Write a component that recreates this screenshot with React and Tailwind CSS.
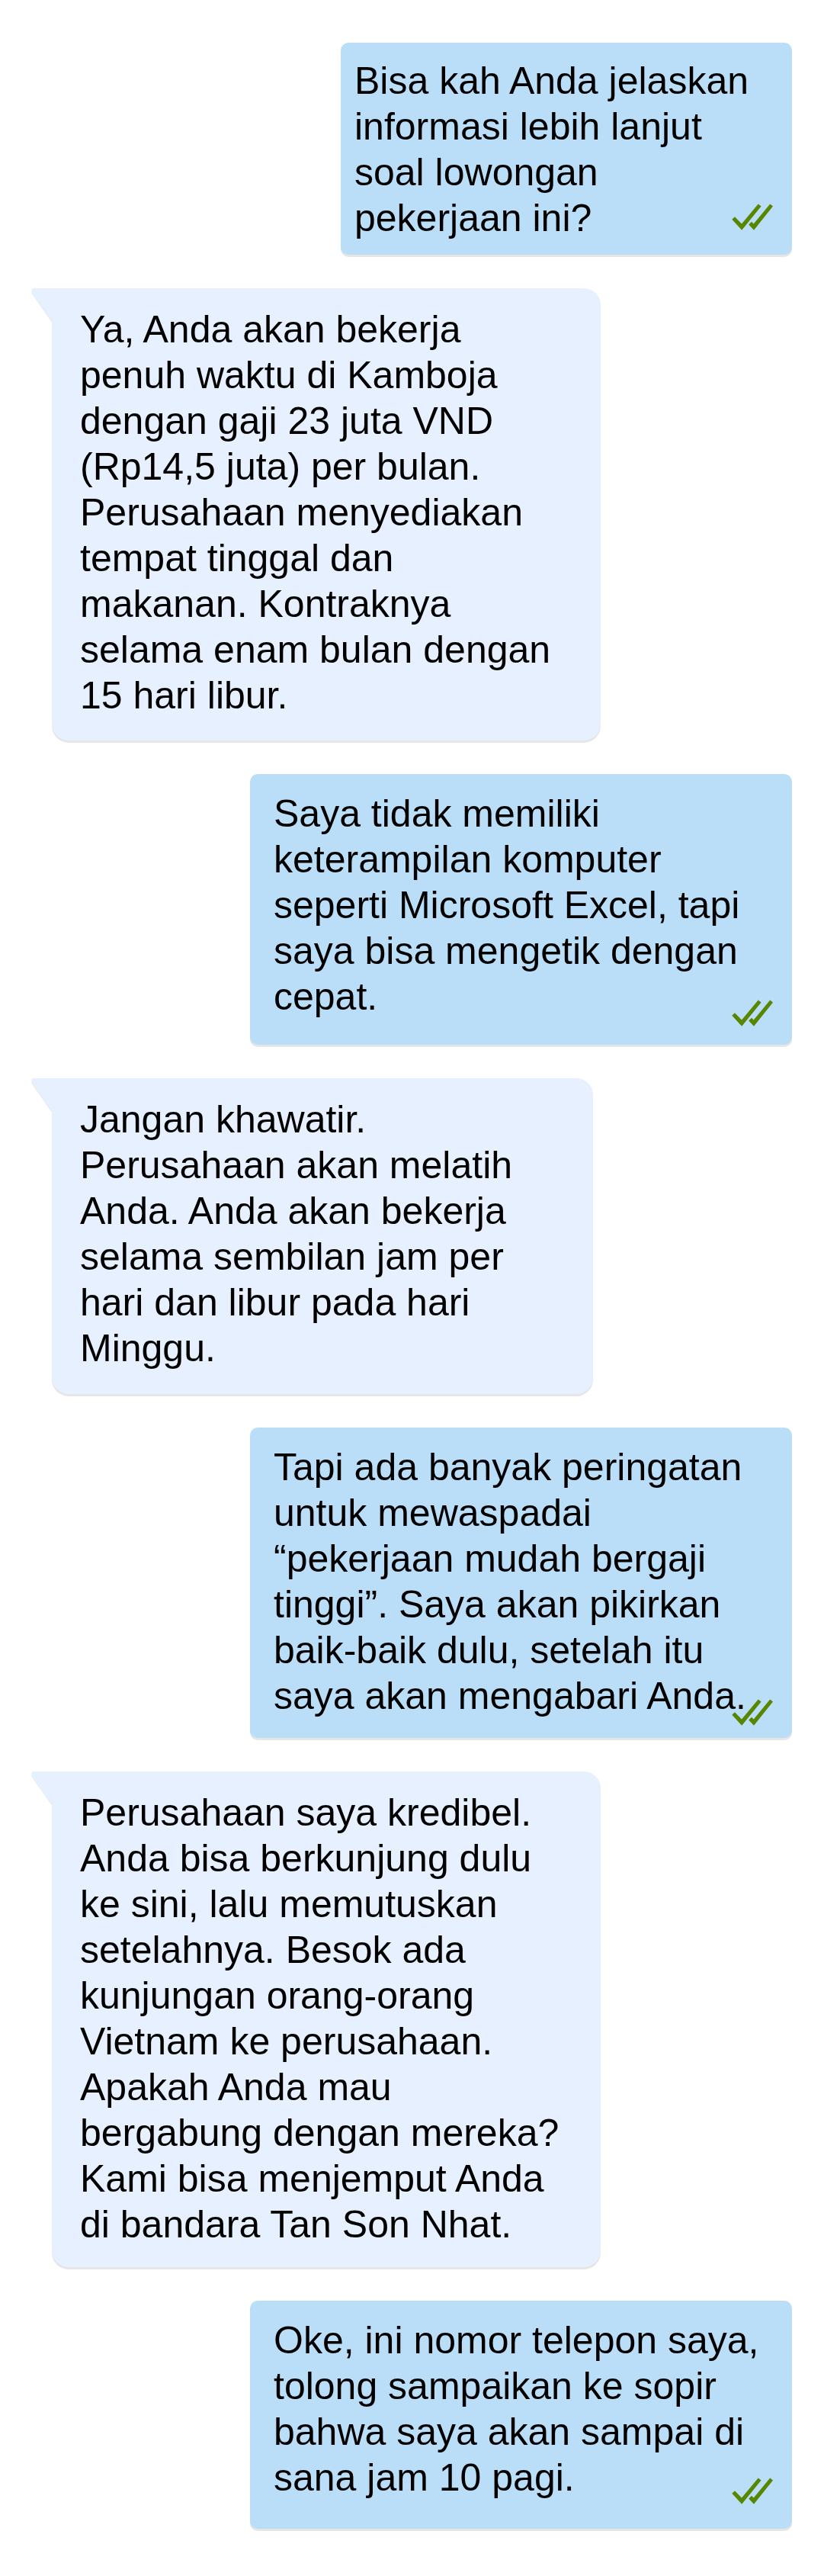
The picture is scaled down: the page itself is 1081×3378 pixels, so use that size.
import React from "react";

const messages = [
  {
    from: "me",
    box: "max-w-[592px] pt-5 pl-[18px] pb-[18px]",
    tick: "bottom-8",
    text: "Bisa kah Anda jelaskan\ninformasi lebih lanjut\nsoal lowongan\npekerjaan ini?",
  },
  {
    from: "them",
    box: "max-w-[720px] pb-[29px]",
    text: "Ya, Anda akan bekerja\npenuh waktu di Kamboja\ndengan gaji 23 juta VND\n(Rp14,5 juta) per bulan.\nPerusahaan menyediakan\ntempat tinggal dan\nmakanan. Kontraknya\nselama enam bulan dengan\n15 hari libur.",
  },
  {
    from: "me",
    box: "max-w-[711px] pt-[22px] pl-[31px] pb-[33px]",
    tick: "bottom-6",
    text: "Saya tidak memiliki\nketerampilan komputer\nseperti Microsoft Excel, tapi\nsaya bisa mengetik dengan\ncepat.",
  },
  {
    from: "them",
    box: "max-w-[710px] pb-[30px]",
    text: "Jangan khawatir.\nPerusahaan akan melatih\nAnda. Anda akan bekerja\nselama sembilan jam per\nhari dan libur pada hari\nMinggu.",
  },
  {
    from: "me",
    box: "max-w-[711px] pt-[22px] pl-[31px] pb-[25px]",
    tick: "bottom-4",
    text: "Tapi ada banyak peringatan\nuntuk mewaspadai\n“pekerjaan mudah bergaji\ntinggi”. Saya akan pikirkan\nbaik-baik dulu, setelah itu\nsaya akan mengabari Anda.",
  },
  {
    from: "them",
    box: "max-w-[720px] pb-[26px]",
    text: "Perusahaan saya kredibel.\nAnda bisa berkunjung dulu\nke sini, lalu memutuskan\nsetelahnya. Besok ada\nkunjungan orang-orang\nVietnam ke perusahaan.\nApakah Anda mau\nbergabung dengan mereka?\nKami bisa menjemput Anda\ndi bandara Tan Son Nhat.",
  },
  {
    from: "me",
    box: "max-w-[711px] pt-[22px] pl-[31px] pb-[37px]",
    tick: "bottom-8",
    text: "Oke, ini nomor telepon saya,\ntolong sampaikan ke sopir\nbahwa saya akan sampai di\nsana jam 10 pagi.",
  },
];

function Ticks({ className }) {
  return (
    <svg
      className={`absolute right-[25px] h-[35px] w-[54px] ${className}`}
      viewBox="0 0 54 35"
      fill="#588600"
      role="img"
      aria-label="Dibaca"
    >
      <path d="M0.3 20.8 L4 17.2 L13 26.6 L34.7 0.4 L38.6 3.6 L13.2 34.7 Z" />
      <path d="M22.2 27.4 L26 23.7 L28.7 26.6 L50.2 0.4 L54 3.6 L29 34.7 Z" />
    </svg>
  );
}

function Tail() {
  return (
    <svg
      className="absolute top-0 -left-[27px] h-[45px] w-7"
      viewBox="0 0 28 45"
      aria-hidden="true"
    >
      <path d="M0 6 L27 44.5 V38 L4 4 Z" fill="#e6e6e6" />
      <path d="M3 0 H28 V43 H27 L1 6.5 Q-1.5 0.5 3 0 Z" fill="#e6f0ff" />
    </svg>
  );
}

function Sent({ message }) {
  return (
    <article
      className={`relative w-full self-end rounded-[10px] bg-[#badef8] shadow-[0_3px_0_#e6e6e6] ${message.box}`}
    >
      <p className="whitespace-pre-line">{message.text}</p>
      <Ticks className={message.tick} />
    </article>
  );
}

function Received({ message }) {
  return (
    <article
      className={`relative ml-[26px] w-full self-start rounded-[22px] rounded-tl-none bg-[#e6f0ff] pt-6 pl-[37px] shadow-[0_3px_0_#e6e6e6] ${message.box}`}
    >
      <Tail />
      <p className="whitespace-pre-line">{message.text}</p>
    </article>
  );
}

export default function App() {
  return (
    <main className="flex flex-col gap-11 bg-white px-[42px] pt-14 pb-[62px] font-['Liberation_Sans',Arial,sans-serif] text-[50px] leading-[60px] text-black">
      {messages.map((message) =>
        message.from === "me" ? (
          <Sent key={message.text} message={message} />
        ) : (
          <Received key={message.text} message={message} />
        )
      )}
    </main>
  );
}
